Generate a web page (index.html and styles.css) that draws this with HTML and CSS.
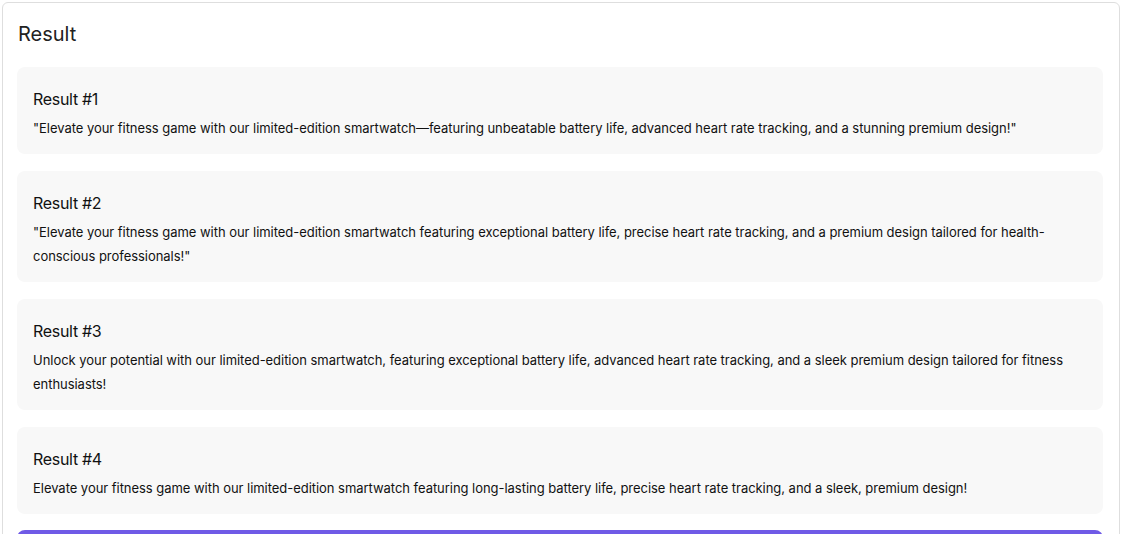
FILE: index.html
```html
<!DOCTYPE html>
<html lang="en">
<head>
  <meta charset="UTF-8" />
  <title>Result</title>
  <link rel="stylesheet" href="styles.css">
</head>
<body>

  <div class="panel">
    <h2 class="panel-title">Result</h2>

    <div class="results">
      <div class="result-card">
        <div class="result-label">Result #1</div>
        <div class="result-text">"Elevate your fitness game with our limited-edition smartwatch—featuring unbeatable battery life, advanced heart rate tracking, and a stunning premium design!"</div>
      </div>
      <div class="result-card">
        <div class="result-label">Result #2</div>
        <div class="result-text">"Elevate your fitness game with our limited-edition smartwatch featuring exceptional battery life, precise heart rate tracking, and a premium design tailored for health-conscious professionals!"</div>
      </div>
      <div class="result-card">
        <div class="result-label">Result #3</div>
        <div class="result-text">Unlock your potential with our limited-edition smartwatch, featuring exceptional battery life, advanced heart rate tracking, and a sleek premium design tailored for fitness enthusiasts!</div>
      </div>
      <div class="result-card">
        <div class="result-label">Result #4</div>
        <div class="result-text">Elevate your fitness game with our limited-edition smartwatch featuring long-lasting battery life, precise heart rate tracking, and a sleek, premium design!</div>
      </div>
    </div>

    <!-- 하단 버튼: 화면 아래로 잘림 -->
    <button class="action-btn" aria-label="Generate"></button>
  </div>

</body>
</html>
```

FILE: styles.css
```css
/* page */
html, body {
  margin: 0; padding: 0;
  background: #fff;
  font-family: "Inter", "Liberation Sans", sans-serif;
  color: #1a1a1a;
}
body {
  padding: 2px 4px 0 2px;
  height: 534px;
  overflow: hidden;
  box-sizing: border-box;
}

/* outer panel */
.panel {
  border: 1px solid #dedede;
  border-radius: 6px;
  padding: 18px 16px 0 14px;
}
.panel-title {
  margin: 0 0 19px 1px;
  font-size: 20px;
  font-weight: 400;
  line-height: 27px;
  color: #222;
}

/* result cards */
.results {
  display: flex; flex-direction: column;
  gap: 17px;
}
.result-card {
  background: #f8f8f8;
  border-radius: 8px;
  padding: 20px 16px 14px;
}
.result-label {
  font-size: 16px;
  line-height: 24px;
  letter-spacing: -0.3px;
  margin-bottom: 5px;
  color: #111;
}
.result-text {
  font-size: 13px;
  line-height: 24px;
  letter-spacing: -0.04px;
  color: #111;
}

/* bottom button */
.action-btn {
  display: block;
  width: 100%;
  margin-top: 16px;
  height: 40px;
  border: none;
  border-radius: 8px;
  background: #6f5ae6;
}
```
